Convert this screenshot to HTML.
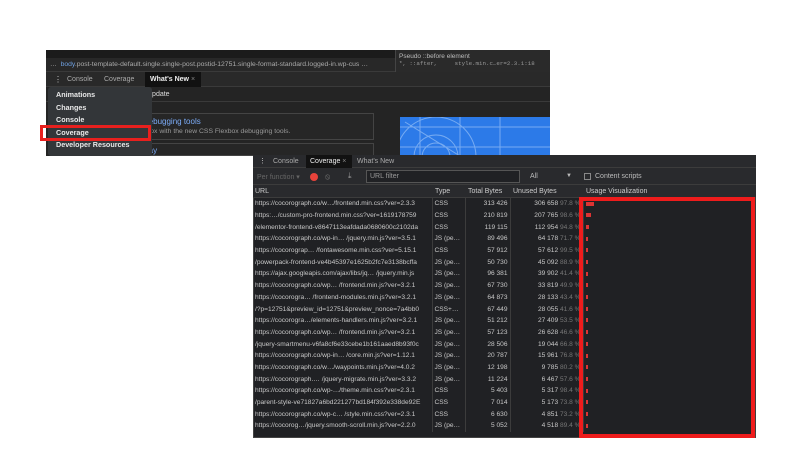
<!DOCTYPE html>
<html><head><meta charset="utf-8"><style>
*{margin:0;padding:0;box-sizing:border-box}
body{width:800px;height:450px;background:#fff;position:relative;overflow:hidden;font-family:"Liberation Sans",sans-serif;font-size:7px;color:#ccc}
.a{position:absolute;white-space:nowrap}
table{border-collapse:collapse;position:absolute;left:253px;top:198px;width:503px;table-layout:fixed}
td{height:11.7px;padding:0 2px;font-size:6.6px;color:#c8c8c8;overflow:hidden;white-space:nowrap;border-right:1px solid #3c3c3c}
td.r{text-align:right}
.p{color:#777}
.b{display:inline-block;height:4px;background:#d33;vertical-align:middle}
</style></head><body>
<!-- window 1 -->
<div class="a" style="left:46px;top:50px;width:504px;height:106px;background:#242424"></div>
<div class="a" style="left:46px;top:50px;width:504px;height:8px;background:#1b1b1b"></div>
<div class="a" style="left:46px;top:58px;width:349px;height:14px;background:#282828;border-bottom:1px solid #3a3a3a;color:#aaa;font-size:6.8px;line-height:14px;padding-left:4px">…&nbsp; <span style="color:#6fa0e0">body</span>.post-template-default.single.single-post.postid-12751.single-format-standard.logged-in.wp-cus …</div>
<div class="a" style="left:395px;top:50px;width:155px;height:22px;background:#2a2a2a;border-left:1px solid #444;font-size:6.5px;color:#bbb;padding:3px 3px">Pseudo ::before element<br><span style="font-family:'Liberation Mono';font-size:5.8px;color:#999">*, ::after,&nbsp;&nbsp;&nbsp;&nbsp;&nbsp;style.min.c…er=2.3.1:18</span></div>
<div class="a" style="left:46px;top:72px;width:504px;height:15px;background:#292929;border-bottom:1px solid #3a3a3a"></div>
<div class="a" style="left:54px;top:75px;color:#ccc;font-size:8px">⋮</div>
<div class="a" style="left:67px;top:76px;color:#aaa">Console</div>
<div class="a" style="left:104px;top:76px;color:#aaa">Coverage</div>
<div class="a" style="left:145px;top:72px;width:56px;height:15px;background:#111;color:#eee;padding:4px 5px;font-weight:bold">What's New <span style="color:#888;font-weight:normal">×</span></div>
<div class="a" style="left:46px;top:87px;width:504px;height:15px;border-bottom:1px solid #3a3a3a;padding:4px 101px;color:#ddd">Update</div>
<div class="a" style="left:105px;top:113px;width:269px;height:27px;border:1px solid #444;background:#262626;padding:3px 8px;font-size:8px;color:#7cacf8">Flexbox debugging tools<br><span style="font-size:6.8px;color:#999">Debug flexbox with the new CSS Flexbox debugging tools.</span></div>
<div class="a" style="left:105px;top:143px;width:269px;height:13px;border:1px solid #444;background:#262626;padding:2px 8px;font-size:8px;color:#7cacf8">Grid overlay</div>
<div class="a" style="left:400px;top:117px;width:150px;height:39px;background:#2c7ae8;overflow:hidden">
<svg width="150" height="39"><g stroke="#8ab8f5" stroke-width="1" fill="none" opacity=".8"><circle cx="36" cy="40" r="22"/><circle cx="36" cy="40" r="14"/><path d="M0 10H150M0 30H150M20 0V39M60 0V39M100 0V39M5 5L60 39"/><circle cx="36" cy="40" r="40"/></g></svg></div>
<div class="a" style="left:48px;top:87px;width:104px;height:69px;background:#333639;border-radius:3px;color:#e8e8e8;font-weight:bold;font-size:7.2px;line-height:12.6px;padding:2px 8px">Animations<br>Changes<br>Console<br>Coverage<br>Developer Resources</div>
<div class="a" style="left:40px;top:125px;width:111px;height:16px;border:3px solid #e8201e"></div>
<!-- window 2 -->
<div class="a" style="left:253px;top:155px;width:503px;height:283px;background:#202124;border:1px solid #444"></div>
<div class="a" style="left:253px;top:155px;width:503px;height:13px;background:#292a2d;border-bottom:1px solid #3c3c3c"></div>
<div class="a" style="left:259px;top:157px;font-size:7px">⋮</div>
<div class="a" style="left:273px;top:158px;color:#aaa">Console</div>
<div class="a" style="left:306px;top:155px;width:46px;height:13px;background:#121212;color:#eee;padding:3px 4px">Coverage <span style="color:#888">×</span></div>
<div class="a" style="left:357px;top:158px;color:#aaa">What's New</div>
<div class="a" style="left:253px;top:168px;width:503px;height:17px;background:#292a2d;border-bottom:1px solid #3c3c3c"></div>
<div class="a" style="left:257px;top:173px;color:#666">Per function ▾</div>
<div class="a" style="left:310px;top:173px;width:8px;height:8px;border-radius:50%;background:#e8433b"></div>
<div class="a" style="left:325px;top:172px;color:#777;font-size:8px">⦸</div>
<div class="a" style="left:348px;top:171px;color:#999;font-size:8px">⤓</div>
<div class="a" style="left:366px;top:170px;width:154px;height:13px;border:1px solid #555;background:#202124;color:#999;padding:2px 3px">URL filter</div>
<div class="a" style="left:530px;top:173px;color:#bbb">All</div>
<div class="a" style="left:566px;top:173px;color:#bbb;font-size:6px">▼</div>
<div class="a" style="left:584px;top:173px;width:7px;height:7px;border:1px solid #888"></div>
<div class="a" style="left:595px;top:173px;color:#bbb">Content scripts</div>
<div class="a" style="left:253px;top:185px;width:503px;height:13px;background:#292a2d;border-bottom:1px solid #3c3c3c"></div>
<div class="a" style="left:255px;top:188px;color:#ccc">URL</div>
<div class="a" style="left:435px;top:188px;color:#ccc">Type</div>
<div class="a" style="left:468px;top:188px;color:#ccc">Total Bytes</div>
<div class="a" style="left:513px;top:188px;color:#ccc">Unused Bytes</div>
<div class="a" style="left:586px;top:188px;color:#ccc">Usage Visualization</div>
<table>
<colgroup><col style="width:179px"><col style="width:33px"><col style="width:45px"><col style="width:73px"><col></colgroup>
<tr><td>https://cocorograph.co/w…/frontend.min.css?ver=2.3.3</td><td>CSS</td><td class="r">313 426</td><td class="r">306 658 <span class="p">97.8 %</span></td><td><span class="b" style="width:8px"></span></td></tr>
<tr><td>https:…/custom-pro-frontend.min.css?ver=1619178759</td><td>CSS</td><td class="r">210 819</td><td class="r">207 765 <span class="p">98.6 %</span></td><td><span class="b" style="width:5px"></span></td></tr>
<tr><td>/elementor-frontend-v8647113eafdada0680600c2102da</td><td>CSS</td><td class="r">119 115</td><td class="r">112 954 <span class="p">94.8 %</span></td><td><span class="b" style="width:3px"></span></td></tr>
<tr><td>https://cocorograph.co/wp-in… /jquery.min.js?ver=3.5.1</td><td>JS (pe…</td><td class="r">89 496</td><td class="r">64 178 <span class="p">71.7 %</span></td><td><span class="b" style="width:2px"></span></td></tr>
<tr><td>https://cocorograp… /fontawesome.min.css?ver=5.15.1</td><td>CSS</td><td class="r">57 912</td><td class="r">57 612 <span class="p">99.5 %</span></td><td><span class="b" style="width:2px"></span></td></tr>
<tr><td>/powerpack-frontend-ve4b45397e1625b2fc7e3138bcffa</td><td>JS (pe…</td><td class="r">50 730</td><td class="r">45 092 <span class="p">88.9 %</span></td><td><span class="b" style="width:2px"></span></td></tr>
<tr><td>https://ajax.googleapis.com/ajax/libs/jq… /jquery.min.js</td><td>JS (pe…</td><td class="r">96 381</td><td class="r">39 902 <span class="p">41.4 %</span></td><td><span class="b" style="width:2px"></span></td></tr>
<tr><td>https://cocorograph.co/wp… /frontend.min.js?ver=3.2.1</td><td>JS (pe…</td><td class="r">67 730</td><td class="r">33 819 <span class="p">49.9 %</span></td><td><span class="b" style="width:2px"></span></td></tr>
<tr><td>https://cocorogra… /frontend-modules.min.js?ver=3.2.1</td><td>JS (pe…</td><td class="r">64 873</td><td class="r">28 133 <span class="p">43.4 %</span></td><td><span class="b" style="width:2px"></span></td></tr>
<tr><td>/?p=12751&amp;preview_id=12751&amp;preview_nonce=7a4bb0</td><td>CSS+…</td><td class="r">67 449</td><td class="r">28 055 <span class="p">41.6 %</span></td><td><span class="b" style="width:2px"></span></td></tr>
<tr><td>https://cocorogra…/elements-handlers.min.js?ver=3.2.1</td><td>JS (pe…</td><td class="r">51 212</td><td class="r">27 409 <span class="p">53.5 %</span></td><td><span class="b" style="width:2px"></span></td></tr>
<tr><td>https://cocorograph.co/wp… /frontend.min.js?ver=3.2.1</td><td>JS (pe…</td><td class="r">57 123</td><td class="r">26 628 <span class="p">46.6 %</span></td><td><span class="b" style="width:2px"></span></td></tr>
<tr><td>/jquery-smartmenu-v6fa8cf6e33cebe1b161aaed8b93f0c</td><td>JS (pe…</td><td class="r">28 506</td><td class="r">19 044 <span class="p">66.8 %</span></td><td><span class="b" style="width:2px"></span></td></tr>
<tr><td>https://cocorograph.co/wp-in… /core.min.js?ver=1.12.1</td><td>JS (pe…</td><td class="r">20 787</td><td class="r">15 961 <span class="p">76.8 %</span></td><td><span class="b" style="width:2px"></span></td></tr>
<tr><td>https://cocorograph.co/w…/waypoints.min.js?ver=4.0.2</td><td>JS (pe…</td><td class="r">12 198</td><td class="r">9 785 <span class="p">80.2 %</span></td><td><span class="b" style="width:2px"></span></td></tr>
<tr><td>https://cocorograph.… /jquery-migrate.min.js?ver=3.3.2</td><td>JS (pe…</td><td class="r">11 224</td><td class="r">6 467 <span class="p">57.6 %</span></td><td><span class="b" style="width:2px"></span></td></tr>
<tr><td>https://cocorograph.co/wp-…/theme.min.css?ver=2.3.1</td><td>CSS</td><td class="r">5 403</td><td class="r">5 317 <span class="p">98.4 %</span></td><td><span class="b" style="width:2px"></span></td></tr>
<tr><td>/parent-style-ve71827a6bd221277bd184f392e338de92E</td><td>CSS</td><td class="r">7 014</td><td class="r">5 173 <span class="p">73.8 %</span></td><td><span class="b" style="width:2px"></span></td></tr>
<tr><td>https://cocorograph.co/wp-c… /style.min.css?ver=2.3.1</td><td>CSS</td><td class="r">6 630</td><td class="r">4 851 <span class="p">73.2 %</span></td><td><span class="b" style="width:2px"></span></td></tr>
<tr><td>https://cocorog…/jquery.smooth-scroll.min.js?ver=2.2.0</td><td>JS (pe…</td><td class="r">5 052</td><td class="r">4 518 <span class="p">89.4 %</span></td><td><span class="b" style="width:2px"></span></td></tr>
</table>
<div class="a" style="left:579px;top:197px;width:176px;height:241px;border:4px solid #ee1c1c"></div>
</body></html>
